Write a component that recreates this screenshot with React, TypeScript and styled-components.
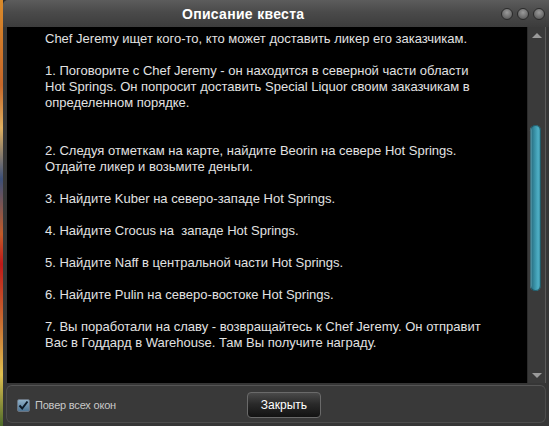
import styled, { createGlobalStyle } from "styled-components";

const GlobalStyle = createGlobalStyle`
  html, body { margin: 0; padding: 0; background: #2b2b2b; }
  body { font-family: "Liberation Sans", Arial, sans-serif; }
`;

const questText = [
  "Chef Jeremy ищет кого-то, кто может доставить ликер его заказчикам.",
  "",
  "1. Поговорите с Chef Jeremy - он находится в северной части области",
  "Hot Springs. Он попросит доставить Special Liquor своим заказчикам в",
  "определенном порядке.",
  "",
  "",
  "2. Следуя отметкам на карте, найдите Beorin на севере Hot Springs.",
  "Отдайте ликер и возьмите деньги.",
  "",
  "3. Найдите Kuber на северо-западе Hot Springs.",
  "",
  "4. Найдите Crocus на  западе Hot Springs.",
  "",
  "5. Найдите Naff в центральной части Hot Springs.",
  "",
  "6. Найдите Pulin на северо-востоке Hot Springs.",
  "",
  "7. Вы поработали на славу - возвращайтесь к Chef Jeremy. Он отправит",
  "Вас в Годдард в Warehouse. Там Вы получите награду.",
];

const App = () => {
  return (
    <>
      <GlobalStyle />
      <Screen>
        <BackdropStrip />
        <Window>
          <TitleBar>
            <Title>Описание квеста</Title>
            <TitleButtons>
              <RoundBtn />
              <RoundBtn />
              <RoundBtn />
            </TitleButtons>
          </TitleBar>

          <Body>
            <Content>
              {questText.map((line, i) => (
                <Line key={i}>{line || "\u00a0"}</Line>
              ))}
            </Content>
            <ScrollBar>
              <Arrow $dir="up" />
              <Track>
                <Thumb />
              </Track>
              <Arrow $dir="down" />
            </ScrollBar>
          </Body>

          <Footer>
            <CheckLabel>
              <CheckBox>
                <svg width="11" height="11" viewBox="0 0 11 11">
                  <path d="M1.5 5.5 L4.2 8.5 L9.5 1.5" fill="none" stroke="#0d1a28" strokeWidth="2" />
                </svg>
              </CheckBox>
              Повер всех окон
            </CheckLabel>
            <CloseBtn>Закрыть</CloseBtn>
          </Footer>
        </Window>
      </Screen>
    </>
  );
};

const Screen = styled.div`
  width: 549px;
  height: 426px;
  display: flex;
  overflow: hidden;
`;

const BackdropStrip = styled.div`
  width: 3px;
  flex-shrink: 0;
  background: linear-gradient(
    180deg,
    #d98a2a 0%,
    #c8682a 20%,
    #e0b060 30%,
    #3c4f78 42%,
    #c25a28 55%,
    #c01818 62%,
    #c86a30 75%,
    #e0c050 88%,
    #4d6a2a 100%
  );
`;

const Window = styled.div`
  flex: 1;
  display: flex;
  flex-direction: column;
  background: #363636;
  border-top-left-radius: 5px;
  padding: 0 0 3px 0;
`;

const TitleBar = styled.div`
  height: 27px;
  display: flex;
  align-items: center;
  background: linear-gradient(180deg, #5c5c5c 0%, #4a4a4a 45%, #3c3c3c 100%);
  border-top-left-radius: 5px;
`;

const Title = styled.div`
  flex: 1;
  padding-left: 179px;
  color: #ffffff;
  font-size: 14px;
  font-weight: bold;
  letter-spacing: 0.3px;
`;

const TitleButtons = styled.div`
  display: flex;
  gap: 4px;
  padding-right: 4px;
`;

const RoundBtn = styled.div`
  width: 10px;
  height: 10px;
  border-radius: 50%;
  background: radial-gradient(circle at 50% 35%, #9a9a9a 0%, #6c6c6c 60%, #4a4a4a 100%);
  border: 1px solid #2a2a2a;
`;

const Body = styled.div`
  height: 356px;
  display: flex;
  margin: 0 3px 0 4px;
  border-right: 1px solid #5a5a5a;
`;

const Content = styled.div`
  flex: 1;
  background: #000;
  padding: 4px 0 0 38px;
  color: #e2e2e2;
  font-size: 13px;
  line-height: 16px;
  overflow: hidden;
`;

const Line = styled.div`
  white-space: pre;
`;

const ScrollBar = styled.div`
  width: 17px;
  display: flex;
  flex-direction: column;
  background: #3a3a3a;
  border-left: 1px solid #2c2c2c;
`;

const Arrow = styled.div<{ $dir: "up" | "down" }>`
  height: 16px;
  display: flex;
  align-items: center;
  justify-content: center;
  &::before {
    content: "";
    width: 0;
    height: 0;
    border-left: 5px solid transparent;
    border-right: 5px solid transparent;
    ${(p) =>
      p.$dir === "up"
        ? "border-bottom: 5px solid #9a9a9a;"
        : "border-top: 5px solid #9a9a9a;"}
  }
`;

const Track = styled.div`
  flex: 1;
  padding: 82px 0 0 2px;
`;

const Thumb = styled.div`
  width: 11px;
  height: 166px;
  border-radius: 6px;
  background: linear-gradient(90deg, #9fd0dc 0%, #2c7588 18%, #3a93a8 45%, #4fb0c6 75%, #2f7e90 100%);
  box-shadow: inset 0 0 0 1px rgba(20, 60, 70, 0.6);
`;

const Footer = styled.div`
  margin: 2px 3px 0 3px;
  flex: 1;
  display: flex;
  align-items: center;
  padding: 2px 0 0 10px;
  border: 1px solid #4c4c4c;
  border-top-color: #555;
  border-radius: 6px;
  background: #393939;
`;

const CheckLabel = styled.label`
  display: flex;
  align-items: center;
  gap: 5px;
  color: #c8c8c8;
  font-size: 11px;
  letter-spacing: -0.2px;
`;

const CheckBox = styled.span`
  width: 11px;
  height: 11px;
  display: flex;
  align-items: center;
  justify-content: center;
  border: 1px solid #6a7480;
  border-radius: 2px;
  background: linear-gradient(180deg, #8fb0c8 0%, #4e7594 100%);
`;

const CloseBtn = styled.button`
  margin-left: 131px;
  width: 74px;
  height: 26px;
  border: 1px solid #6a6a6a;
  border-radius: 4px;
  background: linear-gradient(180deg, #4a4a4a 0%, #2a2a2a 45%, #121212 100%);
  color: #ffffff;
  font-family: "Liberation Sans", Arial, sans-serif;
  font-size: 12px;
  cursor: pointer;
`;

export default App;
